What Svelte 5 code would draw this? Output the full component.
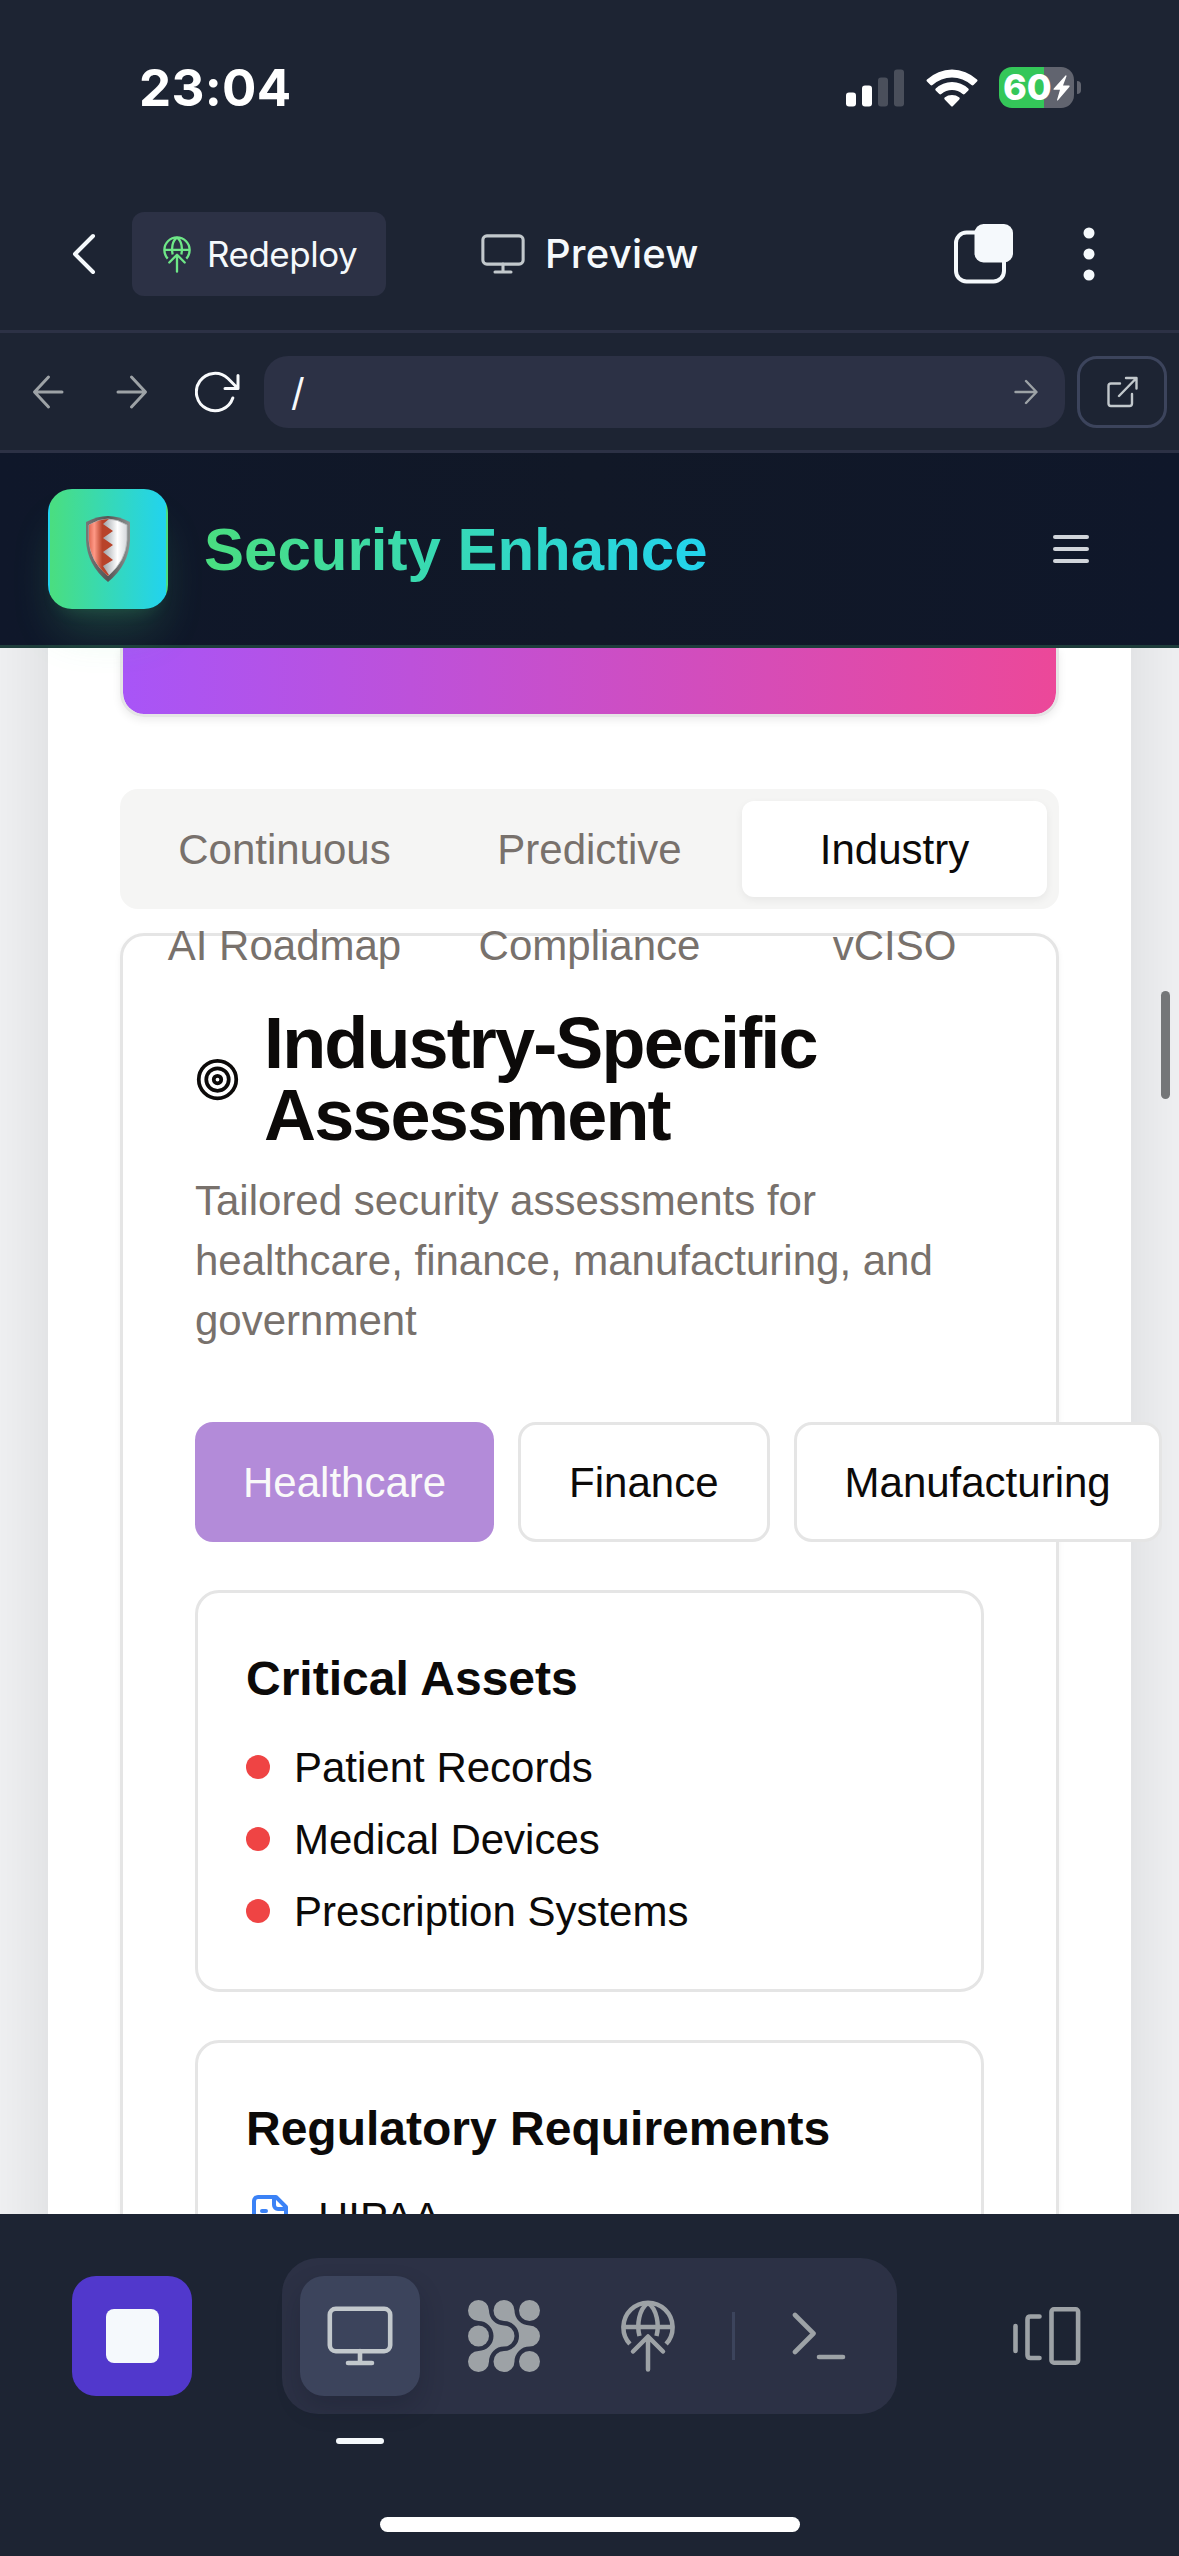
<script>
  const tabs = ['Continuous', 'Predictive', 'Industry', 'AI Roadmap', 'Compliance', 'vCISO'];
  const industries = ['Healthcare', 'Finance', 'Manufacturing'];
  const assets = ['Patient Records', 'Medical Devices', 'Prescription Systems'];
  let tab = $state('Industry');
  let industry = $state('Healthcare');
</script>

{#snippet globe(cls)}
  <svg class={cls} viewBox="0 0 54 72" fill="none" stroke="currentColor" stroke-width="4.5">
    <path d="M8.9 44A24.6 24.6 0 1 1 45.1 44M2.5 27H51.5" />
    <path d="M27 3C18 9 15.500 25 18.500 36M27 3C36 9 38.500 25 35.500 36" />
    <path d="M27 69.500V37M12 51.500L27 36.500L42 51.500" stroke-linecap="round" stroke-linejoin="round" />
  </svg>
{/snippet}

{#snippet monitor(cls)}
  <svg class={cls} viewBox="0 0 66 60" fill="none" stroke="currentColor" stroke-width="4.6" stroke-linecap="round">
    <rect x="2.800" y="2.800" width="60.400" height="42.400" rx="6" />
    <path d="M33 45V57M21 57H45" />
  </svg>
{/snippet}

<div class="phone">
  <div class="status">
    <span class="time">23:04</span>
    <div class="status-icons">
      <svg class="signal" viewBox="0 0 58 38" fill="#fff">
        <rect y="23.500" width="10" height="14" rx="3" />
        <rect x="16" y="16.500" width="10" height="21" rx="3" />
        <rect x="32" y="8.500" width="10" height="29" rx="3" opacity=".2" />
        <rect x="48" y=".5" width="10" height="37" rx="3" opacity=".2" />
      </svg>
      <svg class="wifi" viewBox="0 0 52 38" fill="#fff">
        <path d="M1 10.500Q0 11.500 1 12.500L4.500 16Q5.500 16.800 6.500 16A29 29 0 0 1 45.500 16Q46.500 16.800 47.500 16L51 12.500Q52 11.500 51 10.500A36.500 36.500 0 0 0 1 10.500Z" />
        <path d="M9.700 19.500Q8.700 20.500 9.700 21.500L13.300 25Q14.300 25.800 15.300 25A16.500 16.500 0 0 1 36.700 25Q37.700 25.800 38.700 25L42.300 21.500Q43.300 20.500 42.300 19.500A24 24 0 0 0 9.700 19.500Z" />
        <path d="M18.600 28.500Q17.800 29.600 18.700 30.500L25 37Q26 38 27 37L33.300 30.500Q34.200 29.600 33.400 28.500A12.500 12.500 0 0 0 18.600 28.500Z" />
      </svg>
      <div class="battery">
        <div class="cell">
          <span>60</span>
          <svg viewBox="0 0 17 26" fill="#fff"><path d="M12.500 .5L.6 13.700Q0 14.700 1 14.800H7L4 25Q4 26 5 25.300L16.500 11.700Q17 10.700 16 10.600H10L13.500 1.200Q13.500 0 12.500 .5Z" /></svg>
        </div>
        <i></i>
      </div>
    </div>
  </div>

  <div class="toolbar">
    <svg class="back" viewBox="0 0 24 42" fill="none" stroke="#f5f9fc" stroke-width="4" stroke-linecap="round" stroke-linejoin="round"><path d="M21 3L3 21L21 39" /></svg>
    <button class="redeploy">{@render globe('mini-globe')}<span>Redeploy</span></button>
    <div class="preview">{@render monitor('mini-monitor')}<span>Preview</span></div>
    <svg class="copy" viewBox="0 0 60 60">
      <rect x="2" y="8.500" width="48" height="49" rx="10.500" fill="none" stroke="#f5f9fc" stroke-width="4" />
      <rect x="20.500" y="0" width="38.500" height="38.500" rx="9" fill="#f5f9fc" />
    </svg>
    <svg class="dots" viewBox="0 0 12 54" fill="#f5f9fc"><circle cx="6" cy="6" r="5.500" /><circle cx="6" cy="27" r="5.500" /><circle cx="6" cy="48" r="5.500" /></svg>
  </div>

  <div class="urlbar">
    <svg class="arrow" viewBox="0 0 32 36" fill="none"><path d="M30 18H3M16.500 3L2.500 18L16.500 33" /></svg>
    <svg class="arrow forward" viewBox="0 0 32 36" fill="none"><path d="M2 18H29M15.500 3L29.500 18L15.500 33" /></svg>
    <svg class="reload" viewBox="0 0 46 42" fill="none" stroke="#f8fafc" stroke-width="3" stroke-linecap="round" stroke-linejoin="round"><path d="M37.800 27A18.700 18.700 0 1 1 33 7.500L42.500 17M43 4.500V17.500H30" /></svg>
    <div class="address">
      <span>/</span>
      <svg class="go" viewBox="0 0 24 26" fill="none"><path d="M1.500 13H22M12 2L22.500 13L12 24" /></svg>
    </div>
    <button class="external">
      <svg viewBox="0 0 32 32" fill="none" stroke="#c2c8cc" stroke-width="2.400" stroke-linecap="round" stroke-linejoin="round"><path d="M14 7.500H5Q2.500 7.500 2.500 10V27.500Q2.500 30 5 30H23.500Q26 30 26 27.500V18M20 2H30.500V12.500M30.500 2L13 20" /></svg>
    </button>
  </div>

  <header>
    <div class="logo">
      <svg viewBox="0 0 46 68">
        <defs>
          <linearGradient id="rim" x1="0" x2="1"><stop offset="0" stop-color="#777" /><stop offset=".5" stop-color="#555" /><stop offset="1" stop-color="#8d9292" /></linearGradient>
          <linearGradient id="red" x1="0" x2="1"><stop offset="0" stop-color="#e26a55" /><stop offset=".22" stop-color="#ff9986" /><stop offset=".55" stop-color="#b8432a" /></linearGradient>
          <linearGradient id="silver" x1="0" x2="1"><stop offset=".4" stop-color="#a5a9ae" /><stop offset=".75" stop-color="#fff" /><stop offset="1" stop-color="#d5d8dc" /></linearGradient>
        </defs>
        <path d="M1 7Q12 1 23 1Q34 1 45 7V25Q44 50 23 67Q2 50 1 25Z" fill="url(#rim)" />
        <path d="M4 10Q14 4 23 4Q32 4 42 10V25Q41 46 23 61Q5 46 4 25Z" fill="url(#silver)" stroke="#b5b9ba" stroke-width=".8" />
        <path d="M4 10Q14 4 24 4L18 9L28 16L18 23L28 30L18 37L28 45L18 51L24 60L23 61Q5 46 4 25Z" fill="url(#red)" />
      </svg>
    </div>
    <h1>Security Enhance</h1>
    <div class="burger"><i></i><i></i><i></i></div>
  </header>

  <main>
    <div class="sheet">
      <div class="banner"></div>
      <div class="tabs">
        {#each tabs as name}
          <button class="tab" class:active={tab === name} onclick={() => (tab = name)}>{name}</button>
        {/each}
      </div>
      <section class="card">
        <div class="heading">
          <svg viewBox="0 0 24 24" fill="none" stroke="currentColor" stroke-width="2"><circle cx="12" cy="12" r="10" /><circle cx="12" cy="12" r="6" /><circle cx="12" cy="12" r="2" /></svg>
          <h2>Industry-Specific Assessment</h2>
        </div>
        <p>Tailored security assessments for healthcare, finance, manufacturing, and government</p>
        <div class="chips">
          {#each industries as name}
            <button class="chip" class:chosen={industry === name} onclick={() => (industry = name)}>{name}</button>
          {/each}
        </div>
        <div class="box">
          <h3>Critical Assets</h3>
          <ul>
            {#each assets as asset}<li><i></i><span>{asset}</span></li>{/each}
          </ul>
        </div>
        <div class="box">
          <h3>Regulatory Requirements</h3>
          <ul>
            <li>
              <svg viewBox="0 0 24 24" fill="none" stroke="#3b82f6" stroke-width="2" stroke-linecap="round" stroke-linejoin="round"><path d="M15 2H6a2 2 0 0 0-2 2v16a2 2 0 0 0 2 2h12a2 2 0 0 0 2-2V7ZM14 2v4a2 2 0 0 0 2 2h4M10 9H8M16 13H8M16 17H8" /></svg>
              <span>HIPAA</span>
            </li>
          </ul>
        </div>
      </section>
    </div>
    <div class="scrollbar"></div>
  </main>

  <footer>
    <div class="dock">
      <button class="stop"><i></i></button>
      <nav>
        <button class="tool current">{@render monitor('monitor')}</button>
        <button class="tool">
          <svg class="mesh" viewBox="0 0 72 72" fill="currentColor">
            <path id="strand" d="M21 10.500A15 15 0 0 0 36 25.500A10.500 10.500 0 0 1 36 46.500A15 15 0 0 0 21 61.500A10.500 10.500 0 1 1 10.500 51A15 15 0 0 0 25.500 36A15 15 0 0 0 10.500 21A10.500 10.500 0 1 1 21 10.500Z" />
            <use href="#strand" x="25.500" />
            <circle cx="61.500" cy="10.500" r="10.500" /><circle cx="10.500" cy="36" r="10.500" /><circle cx="61.500" cy="61.500" r="10.500" />
          </svg>
        </button>
        <button class="tool">{@render globe('globe')}</button>
        <span class="divider"></span>
        <button class="tool">
          <svg class="terminal" viewBox="0 0 54 48" fill="none" stroke="currentColor" stroke-width="4.600" stroke-linecap="round" stroke-linejoin="round"><path d="M3 3L21.500 21.500L3 40M27 45H51" /></svg>
        </button>
      </nav>
      <svg class="devices" viewBox="0 0 70 60" fill="none" stroke="currentColor" stroke-width="4.600" stroke-linecap="round"><path d="M3.500 20V45M27.500 10.500H18.500Q15.500 10.500 15.500 13.500V49Q15.500 52 18.500 52H27.500" /><rect x="39.500" y="3.300" width="26.600" height="53.400" rx="2.500" /></svg>
    </div>
    <div class="marker"></div>
    <div class="home"></div>
  </footer>
</div>

<style>
  :global(body) { margin: 0; background: #1d2433; }
  * { box-sizing: border-box; }
  button { border: 0; padding: 0; margin: 0; background: none; font: inherit; color: inherit; }
  h1, h2, h3, p, ul { margin: 0; padding: 0; }
  svg { display: block; flex-shrink: 0; }
  .phone { width: 1179px; height: 2556px; overflow: hidden; display: flex; flex-direction: column; background: #1d2433; font-family: "Liberation Sans", Arial, sans-serif; font-size: 42px; line-height: 60px; }

  .status { height: 178px; padding: 0 98px 0 139px; display: flex; justify-content: space-between; align-items: flex-start; color: #fff; font-family: Inter, sans-serif; }
  .time { margin-top: 58px; font-size: 51px; font-weight: 700; letter-spacing: .3px; }
  .status-icons { display: flex; align-items: center; margin-top: 67px; }
  .signal { width: 58px; height: 38px; }
  .wifi { width: 52px; height: 38px; margin-left: 22px; }
  .battery { display: flex; align-items: center; margin-left: 21px; }
  .battery > i { width: 4px; height: 13px; margin-left: 3px; border-radius: 0 4px 4px 0; background: #61646f; }
  .cell { width: 75px; height: 41px; border-radius: 13px; display: flex; align-items: center; gap: 1px; padding-left: 4px; background: linear-gradient(90deg, #34c759 60%, #61646f 60%); }
  .cell span { width: 49px; font-size: 36px; font-weight: 800; line-height: 41px; letter-spacing: 0; }
  .cell svg { width: 17px; height: 28px; }

  .toolbar { height: 152px; display: flex; align-items: center; padding: 0 84px 0 72px; color: #f5f9fc; font-family: Inter, sans-serif; }
  .back { width: 24px; height: 42px; }
  .redeploy { width: 254px; height: 84px; margin-left: 36px; padding-left: 31px; border-radius: 12px; background: #2c3145; display: flex; align-items: center; gap: 16px; font-size: 35px; letter-spacing: -.5px; }
  .mini-globe { width: 28px; height: 37px; color: #6ee787; }
  .preview { display: flex; align-items: center; margin-left: 95px; gap: 20px; font-size: 40px; font-weight: 500; letter-spacing: .2px; }
  .mini-monitor { width: 44px; height: 40px; color: #c2c8cc; }
  .copy { width: 60px; height: 60px; margin-left: auto; }
  .dots { width: 12px; height: 54px; margin-left: 69px; }

  .urlbar { height: 123px; border-top: 3px solid #2c3145; border-bottom: 3px solid #2c3145; display: flex; align-items: center; padding: 0 12px 0 32px; }
  .arrow, .go { stroke: #9da2a6; stroke-width: 3; stroke-linecap: round; stroke-linejoin: round; }
  .arrow { width: 32px; height: 36px; }
  .forward { margin-left: 52px; }
  .reload { width: 46px; height: 42px; margin-left: 47px; }
  .address { width: 801px; height: 72px; margin-left: 23px; padding: 0 27px; border-radius: 24px; background: #2c3145; display: flex; align-items: center; justify-content: space-between; color: #f8fafc; font-family: Inter, sans-serif; font-size: 38px; }
  .go { width: 24px; height: 26px; stroke-width: 2.4; }
  .external { width: 90px; height: 72px; margin-left: 12px; border: 3px solid #3c445c; border-radius: 20px; display: grid; place-items: center; }
  .external svg { width: 32px; height: 32px; }

  header { position: relative; z-index: 2; height: 195px; flex-shrink: 0; display: flex; align-items: center; padding: 0 90px 0 48px; border-bottom: 3px solid #1e3d3b; background: linear-gradient(90deg, #0f172a, #111827 50%, #0f172a); }
  .logo { width: 120px; height: 120px; border: 3px solid transparent; border-radius: 24px; background: linear-gradient(90deg, #4ade80, #22d3ee) padding-box, linear-gradient(90deg, #22d3ee 2%, #4ade80 2%, #22d3ee 98%, #4ade80 98%) border-box; display: grid; place-items: center; box-shadow: 0 30px 45px -9px rgba(74, 222, 128, .2), 0 12px 18px -12px rgba(74, 222, 128, .2); }
  .logo svg { width: 46px; height: 68px; }
  h1 { margin-left: 36px; padding-top: 2px; font-size: 60px; line-height: 84px; letter-spacing: 0; background: linear-gradient(90deg, #4ade80, #22d3ee); background-clip: text; -webkit-background-clip: text; color: transparent; }
  .burger { width: 36px; margin-left: auto; display: flex; flex-direction: column; gap: 8px; }
  .burger i { height: 4px; border-radius: 2px; background: #d1d5db; }

  main { position: relative; height: 1566px; flex-shrink: 0; overflow: hidden; padding: 0 48px; background: #f2f3f5; }
  .sheet { height: 2000px; margin-top: -200px; padding: 200px 72px 0; background: #fff; box-shadow: 0 0 90px rgba(0, 0, 0, .12); }
  .banner { height: 69px; border: 3px solid #e5e5e5; border-top: 0; border-radius: 0 0 24px 24px; background: linear-gradient(90deg, #a855f7, #ec4899) padding-box; box-shadow: 0 3px 9px rgba(0, 0, 0, .08); }
  .tabs { position: relative; z-index: 1; height: 120px; margin-top: 72px; padding: 12px; border-radius: 18px; background: #f5f5f4; display: grid; grid-template-columns: repeat(3, 1fr); grid-auto-rows: 96px; color: #78716c; }
  .tab { padding-top: 2px; border-radius: 12px; }
  .tab.active { background: #fff; color: #0c0a09; box-shadow: 0 3px 9px rgba(0, 0, 0, .06); }
  .card { margin-top: 24px; height: 1500px; padding: 71px 72px 72px; border: 3px solid #e5e5e5; border-radius: 24px; background: #fff; color: #0c0a09; box-shadow: 0 3px 6px rgba(0, 0, 0, .05); }
  .heading { display: flex; align-items: center; gap: 24px; }
  .heading svg { width: 45px; height: 45px; }
  h2 { font-size: 72px; line-height: 72px; letter-spacing: -1.85px; }
  p { margin-top: 20px; color: #78716c; }
  .chips { margin-top: 71px; display: flex; gap: 24px; }
  .chip { flex-shrink: 0; height: 120px; padding: 2px 48px 0; border: 3px solid #e5e5e5; border-radius: 18px; background: #fff; }
  .chip.chosen { border: 0; background: #b38bd9; color: #fafaf9; }
  .box { margin-top: 48px; padding: 48px; border: 3px solid #e5e5e5; border-radius: 24px; }
  h3 { height: 72px; font-size: 48px; line-height: 75px; }
  ul { margin-top: 24px; list-style: none; display: flex; flex-direction: column; gap: 12px; }
  li { height: 60px; display: flex; align-items: center; gap: 24px; }
  li span { padding-top: 2px; }
  li i { width: 24px; height: 24px; border-radius: 50%; background: #ef4444; }
  li svg { width: 48px; height: 48px; }
  .scrollbar { position: absolute; right: 9px; top: 343px; width: 9px; height: 108px; border-radius: 5px; background: #747678; }

  footer { height: 342px; position: relative; z-index: 3; background: #1d2433; color: #9da2a6; }
  .dock { display: flex; align-items: center; padding: 44px 97px 0 72px; }
  .stop { width: 120px; height: 120px; border-radius: 24px; background: #5138cc; display: grid; place-items: center; }
  .stop i { width: 53px; height: 54px; border-radius: 8px; background: #f5f9fc; }
  nav { height: 156px; margin-left: 90px; padding: 18px; border-radius: 36px; background: #2c3145; display: flex; align-items: center; gap: 24px; }
  .tool { width: 120px; height: 120px; border-radius: 24px; display: grid; place-items: center; }
  .current { background: #3c445c; color: #c2c8cc; box-shadow: 0 12px 24px rgba(15, 18, 30, .22); }
  .monitor { width: 66px; height: 60px; }
  .mesh { width: 72px; height: 72px; }
  .globe { width: 54px; height: 72px; }
  .terminal { width: 54px; height: 48px; }
  .divider { width: 3px; height: 48px; background: #3c445c; }
  .devices { width: 70px; height: 60px; margin-left: auto; }
  .marker { width: 48px; height: 6px; margin: 24px 0 0 336px; border-radius: 3px; background: #f5f9fc; }
  .home { width: 420px; height: 15px; margin: 73px 0 0 380px; border-radius: 8px; background: #fff; }
</style>
